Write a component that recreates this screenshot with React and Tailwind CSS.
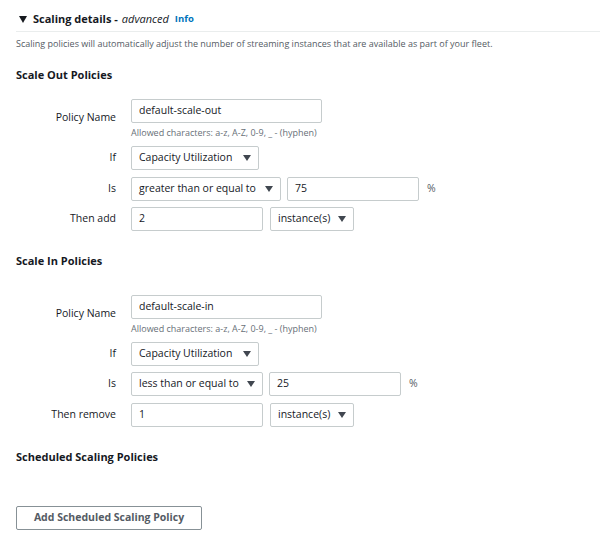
const font = { fontFamily: '"Open Sans", "Liberation Sans", sans-serif' };

function Caret() {
  return (
    <svg width="8" height="6" viewBox="0 0 8 6" className="shrink-0">
      <path d="M0 0 H8 L4 6 Z" fill="#414750" />
    </svg>
  );
}

function TextBox({ value, w }) {
  return (
    <div className={`${w} h-[24px] flex items-center pl-[7px] border border-[#c6cccd] rounded-[2px] bg-white text-[10.5px] text-[#16191f]`}>
      {value}
    </div>
  );
}

function Select({ value, w }) {
  return (
    <div className={`${w} h-[24px] flex items-center justify-between pl-[7px] pr-[7px] border border-[#c6cccd] rounded-[2px] bg-white text-[10.5px] text-[#16191f]`}>
      <span>{value}</span>
      <Caret />
    </div>
  );
}

function Row({ label, children, className = '' }) {
  return (
    <div className={`flex items-center ${className}`}>
      <div className="w-[100px] text-right text-[10.5px] text-[#16191f]">{label}</div>
      <div className="ml-[15px] flex items-center">{children}</div>
    </div>
  );
}

// policy name field: label sits a little lower, beside the input and its hint
function NameField({ value, className = '' }) {
  return (
    <div className={`flex items-start ${className}`}>
      <div className="w-[100px] pt-[11px] text-right text-[10.5px] leading-[15px] text-[#16191f]">Policy Name</div>
      <div className="ml-[15px] flex flex-col">
        <div className="flex"><TextBox value={value} w="w-[191px]" /></div>
        <div className="mt-[4px] text-[9px] leading-[12px] text-[#687078]">
          Allowed characters: a-z, A-Z, 0-9, _ - (hyphen)
        </div>
      </div>
    </div>
  );
}

export default function App() {
  return (
    <div className="w-[602px] h-[540px] bg-white pl-4 pr-[2px] pt-[8px]" style={font}>
      {/* Header */}
      <div className="h-[24px] flex items-center pl-[3px] border-b border-[#eaeded]">
        <svg width="8" height="7" viewBox="0 0 8 7">
          <path d="M0 0 H8 L4 7 Z" fill="#16191f" />
        </svg>
        <span className="ml-[6px] text-[11px] font-bold text-[#16191f]">Scaling details -</span>
        <span className="ml-[4px] text-[11px] italic text-[#16191f]">advanced</span>
        <span className="ml-[6px] text-[9.5px] font-bold text-[#0073bb]">Info</span>
      </div>
      <p className="mt-[5px] text-[9px] leading-[14px] text-[#545b64]">
        Scaling policies will automatically adjust the number of streaming instances that are available as part of your fleet.
      </p>

      {/* Scale out */}
      <h3 className="mt-[16px] text-[11px] leading-[16px] font-bold text-[#16191f]">Scale Out Policies</h3>
      <NameField value="default-scale-out" className="mt-[16px]" />
      <div className="mt-[7px] flex flex-col gap-[6.5px]">
        <Row label="If">
          <Select value="Capacity Utilization" w="w-[128px]" />
        </Row>
        <Row label="Is">
          <Select value="greater than or equal to" w="w-[150px]" />
          <div className="ml-[6px]"><TextBox value="75" w="w-[132px]" /></div>
          <span className="ml-[8px] text-[10.5px] text-[#545b64]">%</span>
        </Row>
        <Row label="Then add">
          <TextBox value="2" w="w-[132px]" />
          <div className="ml-[7px]"><Select value="instance(s)" w="w-[84px]" /></div>
        </Row>
      </div>

      {/* Scale in */}
      <h3 className="mt-[22px] text-[11px] leading-[16px] font-bold text-[#16191f]">Scale In Policies</h3>
      <NameField value="default-scale-in" className="mt-[26px]" />
      <div className="mt-[6.5px] flex flex-col gap-[6.5px]">
        <Row label="If">
          <Select value="Capacity Utilization" w="w-[128px]" />
        </Row>
        <Row label="Is">
          <Select value="less than or equal to" w="w-[132px]" />
          <div className="ml-[6px]"><TextBox value="25" w="w-[132px]" /></div>
          <span className="ml-[8px] text-[10.5px] text-[#545b64]">%</span>
        </Row>
        <Row label="Then remove">
          <TextBox value="1" w="w-[132px]" />
          <div className="ml-[7px]"><Select value="instance(s)" w="w-[84px]" /></div>
        </Row>
      </div>

      {/* Scheduled */}
      <h3 className="mt-[22px] text-[11px] leading-[16px] font-bold text-[#16191f]">Scheduled Scaling Policies</h3>
      <button className="mt-[41px] w-[186px] h-[24px] border border-[#879196] rounded-[2px] bg-white text-[10.5px] font-bold text-[#545b64]">
        Add Scheduled Scaling Policy
      </button>
    </div>
  );
}
